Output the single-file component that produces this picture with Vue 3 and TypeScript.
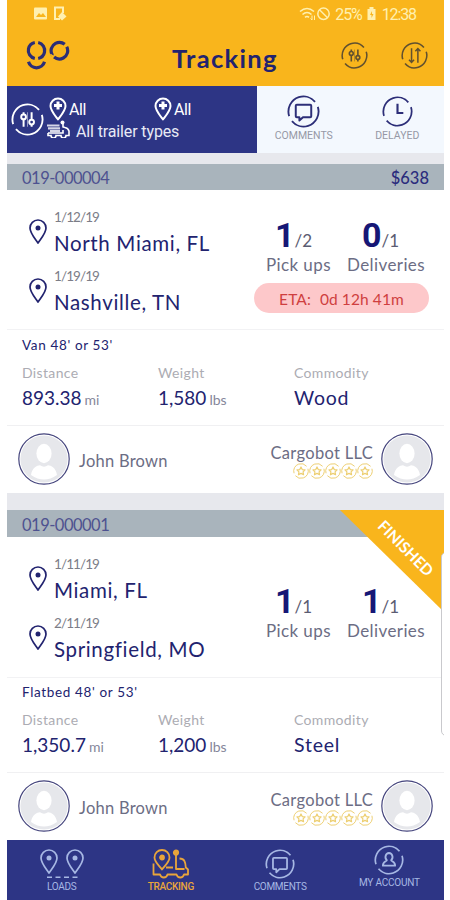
<script setup lang="ts">
interface Stop {
  date: string
  city: string
}
interface Load {
  id: string
  price?: string
  stops: Stop[]
  pickups: [number, number]
  deliveries: [number, number]
  eta?: string
  trailer: string
  distance: string
  weight: string
  commodity: string
  finished: boolean
}

const loads: Load[] = [
  {
    id: '019-000004',
    price: '$638',
    stops: [
      { date: '1/12/19', city: 'North Miami, FL' },
      { date: '1/19/19', city: 'Nashville, TN' },
    ],
    pickups: [1, 2],
    deliveries: [0, 1],
    eta: '0d 12h 41m',
    trailer: "Van 48' or 53'",
    distance: '893.38',
    weight: '1,580',
    commodity: 'Wood',
    finished: false,
  },
  {
    id: '019-000001',
    stops: [
      { date: '1/11/19', city: 'Miami, FL' },
      { date: '2/11/19', city: 'Springfield, MO' },
    ],
    pickups: [1, 1],
    deliveries: [1, 1],
    trailer: "Flatbed 48' or 53'",
    distance: '1,350.7',
    weight: '1,200',
    commodity: 'Steel',
    finished: true,
  },
]
</script>

<template>
  <svg class="defs" aria-hidden="true">
    <symbol id="ring" viewBox="0 0 32 32">
      <circle cx="16" cy="16" r="14.6" fill="none" stroke="currentColor" stroke-width="1.8" pathLength="360"
        stroke-dasharray="158 22" transform="rotate(-18 16 16)" />
    </symbol>
    <symbol id="sliders" viewBox="0 0 32 32">
      <use href="#ring" width="32" height="32" />
      <g fill="none" stroke="currentColor" stroke-width="1.9">
        <circle cx="12.2" cy="13.500" r="2.3" />
        <circle cx="20" cy="18.5" r="2.3" />
        <path d="M12.2 15.800V23M12.2 11.200V9M20 16.200V9M20 20.800V23" />
        <path d="M16 9v14" stroke-width="1" opacity=".5" />
      </g>
    </symbol>
    <symbol id="sort" viewBox="0 0 32 32">
      <use href="#ring" width="32" height="32" />
      <path d="M12.500 7.500V24m-3-3 3 3.200 3-3.200M20 24.500V8m-3 3 3-3.200L23 11" fill="none" stroke="currentColor"
        stroke-width="1.800" />
    </symbol>
    <symbol id="comment" viewBox="0 0 32 32">
      <use href="#ring" width="32" height="32" />
      <path d="M9.500 9.500h13q1 0 1 1v10q0 1-1 1h-7l-3.500 3.300v-3.300h-2.500q-1 0-1-1v-10q0-1 1-1z" fill="none"
        stroke="currentColor" stroke-width="1.900" stroke-linejoin="round" />
    </symbol>
    <symbol id="clock" viewBox="0 0 32 32">
      <use href="#ring" width="32" height="32" />
      <path d="M16 8v9.500h6" fill="none" stroke="currentColor" stroke-width="2.200" />
    </symbol>
    <symbol id="account" viewBox="0 0 32 32">
      <use href="#ring" width="32" height="32" />
      <path d="M16 8.500a4 4.300 0 0 1 2.300 7.600c.3 1.500 4.200 1.200 4.200 5.900h-13c0-4.700 3.900-4.400 4.200-5.900A4 4.300 0 0 1 16 8.500z"
        fill="none" stroke="currentColor" stroke-width="2" stroke-linejoin="round" />
    </symbol>
    <symbol id="pin" viewBox="0 0 18 25">
      <path d="M9 24C6 19.500 1 14 1 9a8 8 0 0 1 16 0c0 5-5 10.500-8 15z" fill="none" stroke="currentColor"
        stroke-width="1.700" stroke-linejoin="round" />
      <circle cx="9" cy="9" r="2.500" fill="currentColor" />
    </symbol>
    <symbol id="pin-plus" viewBox="0 0 18 24">
      <path d="M9 22.500C6 18.500 1.500 13.500 1.500 9a7.500 7.500 0 0 1 15 0c0 4.500-4.500 9.500-7.500 13.500z" fill="none"
        stroke="currentColor" stroke-width="2" stroke-linejoin="round" />
      <path d="M9 4.500v8M5 8.500h8" stroke="currentColor" stroke-width="3" />
    </symbol>
    <symbol id="star" viewBox="0 0 32 32">
      <use href="#ring" width="32" height="32" />
      <path d="m16 8 2.500 5.100 5.600.8-4 4 1 5.600-5.100-2.700-5.100 2.700 1-5.600-4-4 5.600-.8z" fill="none"
        stroke="currentColor" stroke-width="2.400" stroke-linejoin="round" />
    </symbol>
    <symbol id="person" viewBox="0 0 52 52">
      <circle cx="26" cy="26" r="25.200" fill="#fff" stroke="#45457d" stroke-width="1.200" />
      <circle cx="26" cy="26" r="23.600" fill="#e6e7eb" />
      <ellipse cx="26" cy="20.500" rx="7.600" ry="9.700" fill="#fff" />
      <path d="M13 42c1-7 6-9.500 9-9.700q4 2.700 8 0c3 .2 8 2.700 9 9.700q-13 9-26 0z" fill="#fff" />
    </symbol>
  </svg>

  <div class="phone">
    <header class="top">
      <div class="status">
        <svg class="status-left" viewBox="0 0 36 16" fill="none">
          <rect x="1" y="1.500" width="13" height="12" rx="1" fill="#fff0b0" />
          <path d="m3 11 3-4 2 2 2-2 3 4z" fill="#f9b51c" />
          <path d="M30 7V1.500h-8V13h5" stroke="#fff0b0" stroke-width="2" />
          <path d="m29 6 4.500 4.500L29 14.500 25 10.500z" fill="#fff0b0" />
        </svg>
        <div class="status-right">
          <svg class="signals" viewBox="0 0 34 16" fill="none" stroke="#fff0b0">
            <path d="M1 5.500q7-6 14 0M3.500 8.500q4.500-4 9 0M6 11.300q2-1.600 4 0" stroke-width="1.600" />
            <path d="M13 9.500v4.500m-1.500-1.500 1.500 1.500M15.500 14V9.500" stroke-width="1" />
            <circle cx="24.500" cy="7.700" r="5.700" stroke-width="1.500" />
            <path d="m20.500 3.700 8 8" stroke-width="1.500" />
          </svg>
          <span class="percent">25%</span>
          <svg class="battery" viewBox="0 0 8 13"><path d="M0 2h2V0h4v2h2v11H0z" fill="#fff0b0" /><path d="M4.500 4 2.500 8H4v3l2-4H4.500z" fill="#f9b51c" /></svg>
          <span class="time">12:38</span>
        </div>
      </div>
      <div class="titlebar">
        <svg class="logo" viewBox="0 0 44 32" fill="none" stroke="#2b2d77" stroke-width="3.200">
          <circle cx="10.500" cy="10.500" r="8.200" pathLength="360" stroke-dasharray="156 24" transform="rotate(-78 10.500 10.500)" />
          <path d="M2.500 21.700a8.300 8.300 0 0 0 16 0" />
          <circle cx="33.400" cy="10.700" r="8.300" pathLength="360" stroke-dasharray="158 22" transform="rotate(-28 33.400 10.700)" />
        </svg>
        <h1>Tracking</h1>
        <div class="actions">
          <svg class="action"><use href="#sliders" /></svg>
          <svg class="action"><use href="#sort" /></svg>
        </div>
      </div>
    </header>

    <section class="filters">
      <div class="query">
        <svg class="query-icon"><use href="#sliders" /></svg>
        <div class="query-body">
          <div class="places">
            <span class="place"><svg class="plus"><use href="#pin-plus" /></svg>All</span>
            <span class="place"><svg class="plus"><use href="#pin-plus" /></svg>All</span>
          </div>
          <div class="types">
            <svg class="truck" viewBox="0 0 23 18" fill="none" stroke="#fff" stroke-width="1.600">
              <path d="M0 5.500h12.500M1 8.300h12M3 11h10" opacity=".8" stroke-width="2.200" />
              <path d="M1 13v2.500h3a2.300 2.300 0 0 0 5 0h5a2.300 2.300 0 0 0 5 0h3v-4.500q-1-3-4-3.500l-2-.500V3m0 7v3H1" />
              <circle cx="15.500" cy="2.500" r="2" fill="#fff" stroke="none" />
            </svg>
            All trailer types
          </div>
        </div>
      </div>
      <div class="tab"><svg class="tab-icon"><use href="#comment" /></svg><span>COMMENTS</span></div>
      <div class="tab"><svg class="tab-icon small"><use href="#clock" /></svg><span>DELAYED</span></div>
    </section>

    <main>
      <article v-for="load in loads" :key="load.id" class="card">
        <div class="card-head"><span>{{ load.id }}</span><span class="price">{{ load.price }}</span></div>
        <div class="route">
          <div class="stops">
            <div v-for="stop in load.stops" :key="stop.city" class="stop">
              <svg class="pin"><use href="#pin" /></svg>
              <div>
                <div class="date">{{ stop.date }}</div>
                <div class="city">{{ stop.city }}</div>
              </div>
            </div>
          </div>
          <div class="progress" :class="{ centered: !load.eta }">
            <div class="counts">
              <div class="count">
                <div class="num"><b>{{ load.pickups[0] }}</b>/{{ load.pickups[1] }}</div>
                <div class="cap">Pick ups</div>
              </div>
              <div class="count">
                <div class="num del"><b>{{ load.deliveries[0] }}</b>/{{ load.deliveries[1] }}</div>
                <div class="cap">Deliveries</div>
              </div>
            </div>
            <div v-if="load.eta" class="eta"><span>ETA:</span><span>{{ load.eta }}</span></div>
          </div>
        </div>
        <div class="details">
          <div class="trailer">{{ load.trailer }}</div>
          <div class="facts">
            <div><div class="label">Distance</div><div class="value">{{ load.distance }}<small>mi</small></div></div>
            <div><div class="label">Weight</div><div class="value">{{ load.weight }}<small>lbs</small></div></div>
            <div><div class="label">Commodity</div><div class="value word">{{ load.commodity }}</div></div>
          </div>
        </div>
        <div class="people">
          <svg class="avatar"><use href="#person" /></svg>
          <span class="driver">John Brown</span>
          <div class="company">
            <div>Cargobot LLC</div>
            <div class="stars"><svg v-for="n in 5" :key="n" class="star"><use href="#star" /></svg></div>
          </div>
          <svg class="avatar"><use href="#person" /></svg>
        </div>
        <div v-if="load.finished" class="ribbon"><span>FINISHED</span></div>
      </article>
    </main>

    <nav class="nav">
      <div class="item">
        <svg class="nav-loads" viewBox="0 0 46 30" fill="none">
          <use href="#pin" x="1" y="0" width="18" height="25" />
          <use href="#pin" x="27" y="0" width="18" height="25" />
          <path d="M8 28.200h32" stroke="currentColor" stroke-width="1.500" stroke-dasharray="5 3.500" />
        </svg>
        <span>LOADS</span>
      </div>
      <div class="item active">
        <svg class="nav-truck" viewBox="0 0 38 30" fill="none" stroke="currentColor" stroke-width="1.800" stroke-linejoin="round">
          <path d="M10 20.500C7 16.500 2.500 13 2.500 8.500a7.500 7.500 0 0 1 15 0C17.500 13 13 16.500 10 20.500z" />
          <circle cx="10" cy="8.500" r="2" fill="currentColor" />
          <circle cx="24" cy="3.600" r="2.200" fill="currentColor" />
          <path d="M24 5.500v14.500h8.500M27.500 9.500c5 0 6 3.500 6.300 9l2.200 2v5h-4q-.800 3-3.700 3t-3.800-3h-9q-.800 3-3.700 3t-3.800-3H1.500V14.500M14 18.500h7" />
        </svg>
        <span>TRACKING</span>
      </div>
      <div class="item">
        <svg class="nav-ring"><use href="#comment" /></svg>
        <span>COMMENTS</span>
      </div>
      <div class="item account">
        <svg class="nav-ring"><use href="#account" /></svg>
        <span>MY ACCOUNT</span>
      </div>
    </nav>
    <div class="edge-handle"></div>
  </div>
</template>

<style>
body {
  background: #fff;
}
</style>

<style scoped>
* {
  box-sizing: border-box;
}
.defs {
  position: absolute;
  width: 0;
  height: 0;
}
.phone {
  position: relative;
  width: 437px;
  height: 900px;
  margin-left: 7px;
  display: flex;
  flex-direction: column;
  overflow: hidden;
  color: #22236f;
  background: #e7e8ed;
  font-family: Lato, "Liberation Sans", sans-serif;
  white-space: nowrap;
}
svg {
  display: block;
  flex: none;
}
.top {
  flex: none;
  height: 86px;
  background: #f9b51c;
}
.status {
  height: 28px;
  padding: 6px 28px 0 26px;
  display: flex;
  justify-content: space-between;
  color: #fff0b0;
  font: 16px/17px Roboto, sans-serif;
}
.status-left {
  width: 36px;
  height: 16px;
}
.status-right {
  display: flex;
}
.signals {
  width: 34px;
  height: 16px;
}
.percent {
  margin-left: 2px;
  letter-spacing: -1.1px;
}
.battery {
  width: 9px;
  height: 13px;
  margin: 1px 6px 0 5px;
}
.time {
  letter-spacing: -1.1px;
}
.titlebar {
  height: 58px;
  display: grid;
  grid-template-columns: 165px 1fr auto;
  padding: 0 16px 0 0;
}
.logo {
  width: 44px;
  height: 32px;
  margin: 12px 0 0 19px;
}
h1 {
  margin: 14px 0 0;
  font-size: 25.500px;
  line-height: 32px;
  font-weight: 700;
  letter-spacing: 1.300px;
}
.actions {
  display: flex;
  gap: 33px;
  padding-top: 14px;
}
.action {
  width: 27px;
  height: 27px;
  color: #61502f;
}
.filters {
  flex: none;
  height: 67px;
  display: grid;
  grid-template-columns: 250px 93.500px 93.500px;
  background: #f3f8fe;
}
.query {
  display: flex;
  padding: 11px 0 0 4px;
  background: #2d3585;
  color: #fff;
  font: 16px/24px Roboto, sans-serif;
}
.query-icon {
  width: 33px;
  height: 33px;
  margin-top: 6px;
}
.query-body {
  padding-left: 3px;
}
.places {
  display: flex;
  height: 23px;
}
.place {
  display: flex;
  width: 105px;
  padding-left: 2px;
  line-height: 25px;
  gap: 2px;
  letter-spacing: -0.4px;
}
.plus {
  width: 18px;
  height: 24px;
}
.types {
  display: flex;
  gap: 6px;
  color: #e8eaf5;
  line-height: 23px;
  letter-spacing: -0.130px;
}
.truck {
  width: 23px;
  height: 18px;
}
.tab {
  display: flex;
  flex-direction: column;
  align-items: center;
  padding-top: 9px;
  color: #2c2e78;
}
.tab-icon {
  width: 33px;
  height: 33px;
}
.tab-icon.small {
  width: 31px;
  height: 31px;
  margin: 1px;
}
.tab span {
  margin-top: 2px;
  color: #9698a6;
  font: 10.500px/12px Roboto, sans-serif;
}
main {
  flex: none;
}
.card {
  position: relative;
  margin-top: 11px;
  background: #fff;
}
.card + .card {
  margin-top: 17px;
}
.card-head {
  height: 26px;
  display: flex;
  justify-content: space-between;
  padding: 0 15px;
  background: #a9b4bc;
  color: #4e5290;
  font-size: 16.500px;
  line-height: 28px;
  letter-spacing: -0.500px;
}
.card + .card .card-head {
  height: 27px;
  line-height: 30px;
}
.card-head .price {
  color: #2b2c7c;
  font-weight: 500;
  letter-spacing: 0;
}
.route {
  height: 140px;
  display: flex;
  justify-content: space-between;
  border-bottom: 1px solid #f2f2f4;
}
.card + .card .route {
  height: 141px;
}
.stops {
  padding: 19px 0 0 22px;
}
.stop {
  display: flex;
  height: 58.500px;
  gap: 7px;
}
.pin {
  width: 18px;
  height: 25px;
  margin-top: 10px;
}
.date {
  color: #7c7d87;
  font-size: 13.500px;
  line-height: 17px;
  letter-spacing: -0.900px;
}
.city {
  margin-top: 4px;
  font-size: 20.500px;
  line-height: 26px;
  letter-spacing: 0.650px;
}
.progress {
  width: 190px;
  padding-top: 28px;
}
.progress.centered {
  padding-top: 47px;
}
.counts {
  display: grid;
  grid-template-columns: 81px 1fr;
  padding-left: 12px;
}
.num {
  display: flex;
  align-items: baseline;
  height: 37px;
  padding-left: 9px;
  color: #5b5c72;
  font-size: 17px;
  line-height: 37px;
}
.num.del {
  padding-left: 15px;
}
.num b {
  color: #161776;
  font-family: Roboto, sans-serif;
  font-size: 34px;
  line-height: 34px;
}
.cap {
  color: #6c6d84;
  font-size: 17px;
  line-height: 20px;
  letter-spacing: 0.400px;
}
.eta {
  width: 175px;
  height: 30px;
  margin: 8px 0 0;
  display: flex;
  justify-content: center;
  gap: 9px;
  border-radius: 15px;
  background: #fdc8ca;
  color: #cf3f3f;
  font-size: 15.500px;
  line-height: 32px;
  letter-spacing: 0.100px;
}
.details {
  height: 96px;
  padding: 5px 15px 0;
  border-bottom: 1px solid #f0f0f2;
}
.card + .card .details {
  height: 95px;
  padding-top: 4px;
}
.trailer {
  font-size: 13.500px;
  line-height: 20px;
  letter-spacing: 0.650px;
}
.facts {
  display: grid;
  grid-template-columns: 136px 136px 1fr;
  margin-top: 9px;
}
.label {
  color: #acacb3;
  font-size: 14px;
  line-height: 18px;
  letter-spacing: 0.350px;
}
.value {
  margin-top: 3px;
  font-size: 19px;
  line-height: 26px;
}
.value.word {
  font-size: 19.500px;
  letter-spacing: 0.800px;
}
.value small {
  margin-left: 3px;
  color: #85869a;
  font-size: 14px;
}
.people {
  height: 67px;
  display: flex;
  align-items: flex-start;
  padding: 7px 11px 0;
}
.avatar {
  width: 52px;
  height: 52px;
}
.driver {
  flex: 1;
  padding: 17px 0 0 9px;
  color: #6c6d84;
  font-size: 16.500px;
  line-height: 22px;
  letter-spacing: 0.250px;
}
.company {
  display: flex;
  flex-direction: column;
  align-items: flex-end;
  padding: 9px 8px 0 0;
  color: #6c6d84;
  font-size: 16.500px;
  line-height: 22px;
  letter-spacing: 0.300px;
}
.stars {
  display: flex;
  margin-top: -1px;
  color: #edcf72;
}
.star {
  width: 16px;
  height: 16px;
}
.ribbon {
  position: absolute;
  top: 0;
  right: 0;
  width: 104px;
  height: 102px;
  background: #f9b51c;
  clip-path: polygon(0 0, 100% 0, 100% 100%);
  color: #fff;
}
.ribbon span {
  position: absolute;
  top: 28px;
  left: 21px;
  width: 90px;
  text-align: center;
  font-size: 15.500px;
  line-height: 20px;
  font-weight: 700;
  transform: rotate(45deg);
}
.nav {
  flex: none;
  height: 60px;
  display: grid;
  grid-template-columns: repeat(4, 1fr);
  background: #2d3585;
  color: #a7b8e4;
}
.item {
  display: flex;
  flex-direction: column;
  align-items: center;
  padding-top: 9px;
}
.item span {
  margin-top: 1px;
  font: 10px/14px Roboto, sans-serif;
  letter-spacing: -0.300px;
}
.item.active {
  color: #e9a53b;
}
.item.active span {
  font-weight: 500;
}
.item.account {
  padding-top: 5px;
}
.item.account span {
  letter-spacing: -0.200px;
}
.nav-loads {
  width: 46px;
  height: 30px;
}
.nav-truck {
  width: 38px;
  height: 30px;
}
.nav-ring {
  width: 30px;
  height: 30px;
}
.edge-handle {
  position: absolute;
  top: 552px;
  left: 434px;
  width: 12px;
  height: 184px;
  border: 1px solid #c9c9cd;
  border-radius: 5px;
  background: #fff;
}
</style>
